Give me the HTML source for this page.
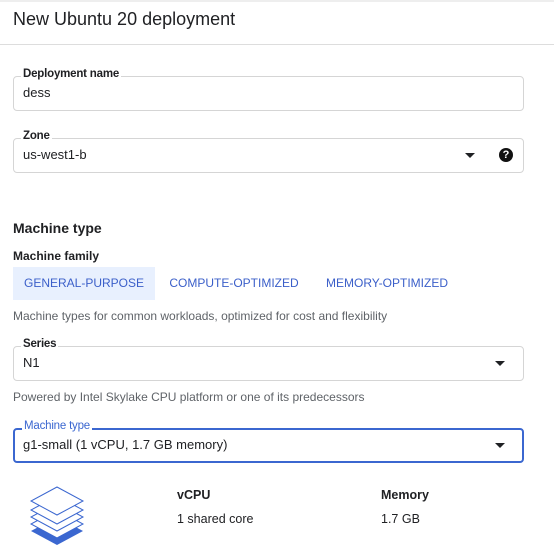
<!DOCTYPE html>
<html><head><style>
body{margin:0;width:554px;height:554px;background:#fff;font-family:"Liberation Sans",Arial,sans-serif;color:#202124;position:relative;overflow:hidden}
.a{position:absolute}
.box{position:absolute;left:13px;width:509px;height:33px;border:1px solid #d5d5d5;border-radius:4px}
.lbl{position:absolute;left:7px;top:-9px;background:#fff;padding:0 2px;font-size:11.5px;font-weight:bold;color:#202124;letter-spacing:-0.2px}
.val{position:absolute;left:9px;top:8px;font-size:13px}
.arr{position:absolute;right:18px;top:14px;width:0;height:0;border-left:5px solid transparent;border-right:5px solid transparent;border-top:5px solid #202124}
.tab{position:absolute;top:267px;height:33px;line-height:33px;font-size:12px;color:#3b5fc9;text-align:center}
</style></head><body>
<div class="a" style="left:0;top:0;width:554px;height:2px;background:#eee"></div>
<div class="a" style="left:13px;top:9px;font-size:18px">New Ubuntu 20 deployment</div>
<div class="a" style="left:0;top:44px;width:554px;height:1px;background:#ddd"></div>

<div class="box" style="top:76px"><div class="lbl">Deployment name</div><div class="val">dess</div></div>
<div class="box" style="top:138px"><div class="lbl">Zone</div><div class="val">us-west1-b</div><div class="arr" style="right:48px"></div>
<div class="a" style="right:10px;top:9px;width:14px;height:14px;border-radius:50%;background:#111;color:#fff;font-size:11px;font-weight:bold;text-align:center;line-height:14px">?</div></div>

<div class="a" style="left:13px;top:220px;font-size:14px;font-weight:bold">Machine type</div>
<div class="a" style="left:13px;top:249px;font-size:12px;font-weight:bold">Machine family</div>
<div class="tab" style="left:13px;width:142px;background:#e8f0fe">GENERAL-PURPOSE</div>
<div class="tab" style="left:163px;width:142px">COMPUTE-OPTIMIZED</div>
<div class="tab" style="left:318px;width:138px">MEMORY-OPTIMIZED</div>
<div class="a" style="left:13px;top:309px;font-size:12px;color:#5f6368">Machine types for common workloads, optimized for cost and flexibility</div>

<div class="box" style="top:346px"><div class="lbl">Series</div><div class="val">N1</div><div class="arr"></div></div>
<div class="a" style="left:13px;top:390px;font-size:12px;color:#5f6368">Powered by Intel Skylake CPU platform or one of its predecessors</div>

<div class="box" style="top:428px;border:2px solid #3b67d0;width:507px;height:31px"><div class="lbl" style="color:#3b67d0;font-weight:normal;top:-10px">Machine type</div><div class="val" style="top:7px;left:8px">g1-small (1 vCPU, 1.7 GB memory)</div><div class="arr" style="right:17px;top:13px"></div></div>

<svg class="a" style="left:28px;top:484px" width="58" height="64" viewBox="0 0 58 64">
<polygon points="29,61 55,47 29,33 3,47" fill="#3b67d0"/>
<g fill="#fff" stroke="#3b67d0" stroke-width="1">
<polygon points="29,54 55,40 29,26 3,40"/>
<polygon points="29,47 55,33 29,19 3,33"/>
<polygon points="29,40 55,26 29,12 3,26"/>
<polygon points="29,31 55,17 29,3 3,17"/>
</g></svg>

<div class="a" style="left:177px;top:488px;font-size:12.5px;font-weight:bold">vCPU</div>
<div class="a" style="left:177px;top:512px;font-size:12.5px">1 shared core</div>
<div class="a" style="left:381px;top:488px;font-size:12.5px;font-weight:bold">Memory</div>
<div class="a" style="left:381px;top:512px;font-size:12.5px">1.7 GB</div>
</body></html>
